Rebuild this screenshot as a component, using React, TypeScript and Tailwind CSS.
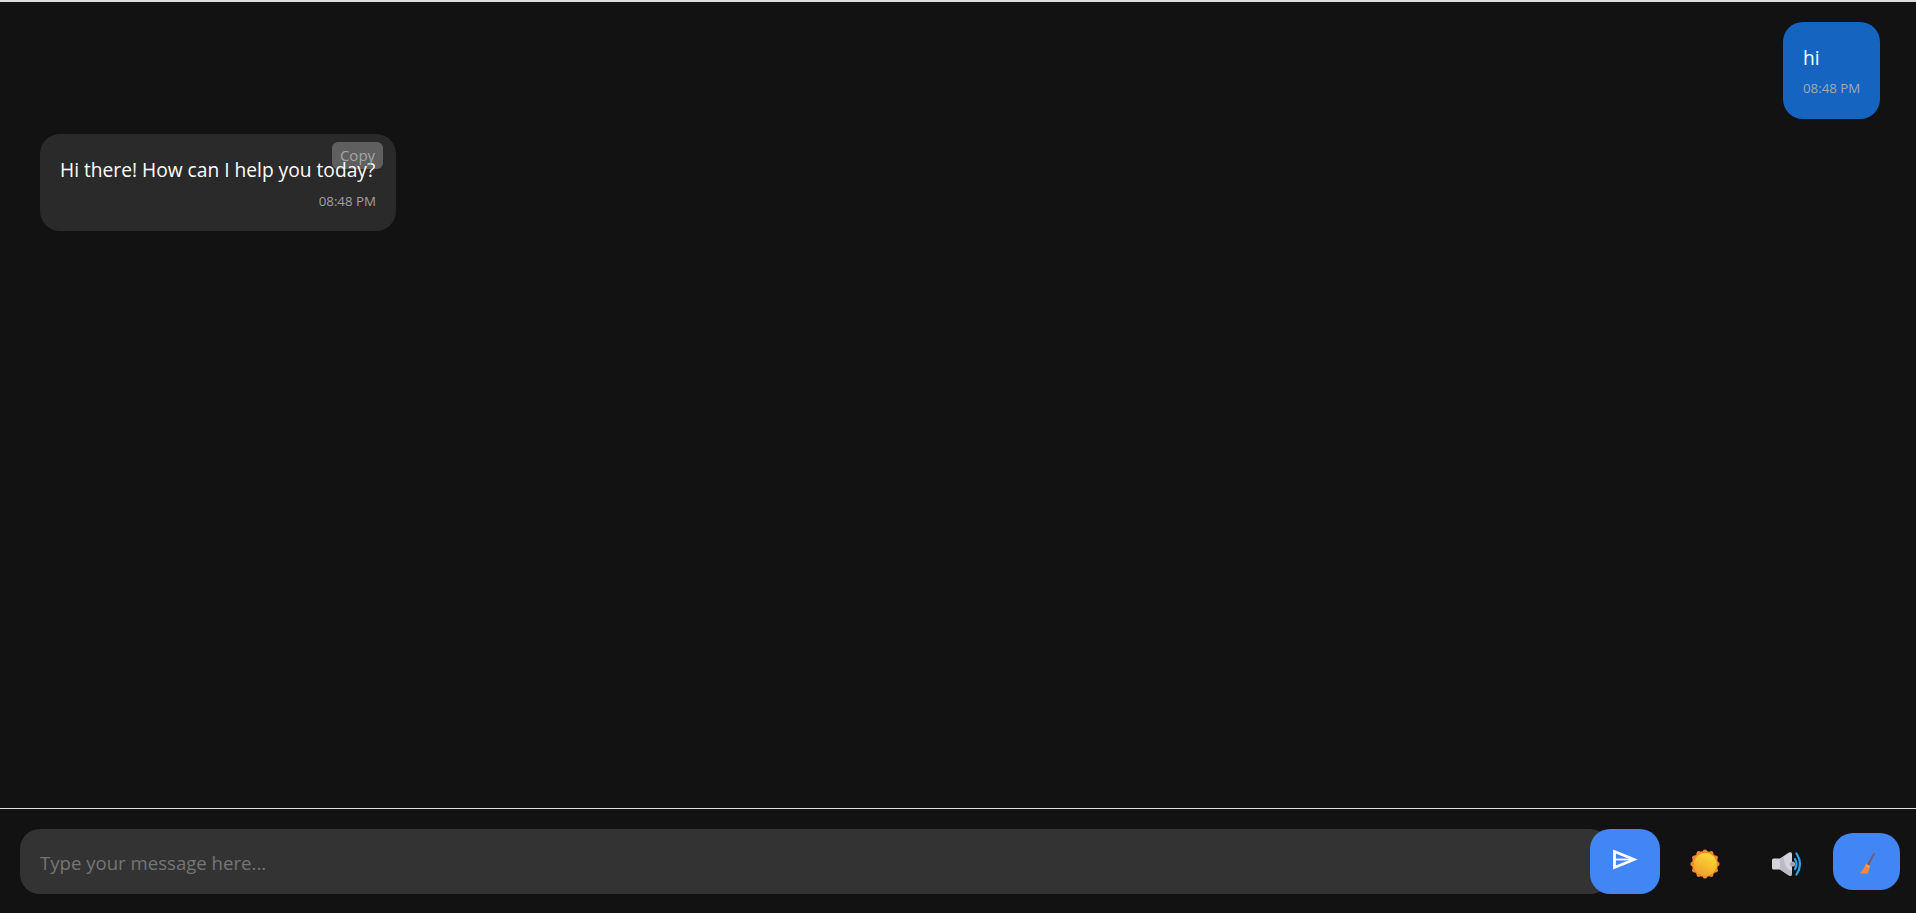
import React from 'react';

const font = "font-['Open_Sans','Noto_Sans',sans-serif]";

const SendIcon = () => (
  <svg className="mb-1" width="26" height="22" viewBox="0 0 26 22" fill="none" stroke="#ffffff" strokeWidth="2.8">
    <path d="M2.5 2.5 L22 10.5 L2.5 18.5 Z" />
    <path d="M3 10.5 H20" strokeWidth="1.8" />
  </svg>
);

const SunIcon = () => {
  const bumps = Array.from({ length: 12 }, (_, i) => (i * Math.PI) / 6);
  return (
    <svg width="30" height="30" viewBox="0 0 30 30">
      <defs>
        <linearGradient id="sunFill" x1="0.7" y1="0.1" x2="0.3" y2="0.9">
          <stop offset="0" stopColor="#fdd835" />
          <stop offset="1" stopColor="#efa52c" />
        </linearGradient>
      </defs>
      <circle cx="15" cy="15" r="13" fill="#f58a2e" />
      {bumps.map((a) => (
        <circle key={a} cx={15 + 12.4 * Math.cos(a)} cy={15 + 12.4 * Math.sin(a)} r="2.2" fill="#f58a2e" />
      ))}
      <circle cx="15.3" cy="15.3" r="11.4" fill="url(#sunFill)" />
    </svg>
  );
};

const SpeakerIcon = () => (
  <svg width="32" height="26" viewBox="0 0 32 26" fill="none">
    <path d="M1 9 Q1 7.5 2.5 7.5 H9 L18 1.5 Q21 0.5 21 3 V23 Q21 25.5 18 24.5 L9 18.5 H2.5 Q1 18.5 1 17 Z" fill="#d6d3dc" />
    <path d="M9 7.5 V18.5 L18 24.5 Q21 25.5 21 23 V20 Q14 19 12.5 6 Z" fill="#bdb9c6" />
    <circle cx="21.5" cy="13" r="2.6" fill="#a8a4b2" />
    <path d="M24 8 Q27 13 24 18" stroke="#2ea3ee" strokeWidth="2.2" strokeLinecap="round" />
    <path d="M25.5 2.5 Q32.5 13 25.5 23.5" stroke="#2ea3ee" strokeWidth="2.2" strokeLinecap="round" />
  </svg>
);

const BroomIcon = () => (
  <svg width="16" height="24" viewBox="0 0 16 24">
    <path d="M15 4 L9 15" stroke="#7d5a5f" strokeWidth="1.8" strokeLinecap="round" />
    <path d="M7 13.5 L11 16 L9 23.5 L0.5 23.5 Q4.5 20 7 13.5 Z" fill="#f7873e" />
    <path d="M7.5 15.5 L10.2 17.2" stroke="#fdb26b" strokeWidth="1.1" />
  </svg>
);

export default function App() {
  return (
    <div className={`h-screen flex flex-col bg-[#121212] border-t-2 border-[#dcdcdc] overflow-hidden ${font}`}>
      <div className="flex-1 min-h-0 flex flex-col gap-[15px] pt-5 pl-10 pr-9">
        <div className="self-end w-[97px] h-[97px] rounded-[20px] bg-[#1565c0] p-5">
          <p className="text-white text-[19.2px] leading-[32px]">hi</p>
          <p className="mt-[5px] text-[13.3px] leading-[18px] text-right text-[#a0a8b4] whitespace-nowrap">08:48 PM</p>
        </div>
        <div className="relative self-start w-[356px] h-[97px] rounded-[20px] bg-[#2a2a2a] p-5">
          <p className="text-white text-[19.2px] leading-[32px] whitespace-nowrap">Hi there! How can I help you today?</p>
          <p className="mt-[6px] text-[13.3px] leading-[18px] text-right text-[#a0a0a0]">08:48 PM</p>
          <button className="absolute top-2 right-[13px] w-[51px] h-[27px] rounded-md bg-[#ffffff40] text-[#a6a6a6] text-[15px]">Copy</button>
        </div>
      </div>
      <div className="shrink-0 flex items-center border-t border-[#e0e0e0] pt-5 pb-[19px] pl-5 pr-4">
        <input
          className="flex-1 min-w-0 h-[65px] rounded-[20px] bg-[#333333] pl-5 pr-5 pt-[2px] text-[18.6px] text-white outline-none placeholder:text-[#757575]"
          placeholder="Type your message here..."
        />
        <button className="-ml-5 w-[70px] h-[65px] shrink-0 rounded-[20px] bg-[#4285f4] flex items-center justify-center">
          <SendIcon />
        </button>
        <button className="w-[90px] h-[65px] pt-[4px] shrink-0 flex items-center justify-center">
          <SunIcon />
        </button>
        <button className="w-[74px] h-[65px] pt-[4px] shrink-0 flex items-center justify-center">
          <SpeakerIcon />
        </button>
        <button className="ml-[9px] w-[67px] h-[57px] shrink-0 rounded-[20px] bg-[#4285f4] flex items-center justify-center">
          <BroomIcon />
        </button>
      </div>
    </div>
  );
}
